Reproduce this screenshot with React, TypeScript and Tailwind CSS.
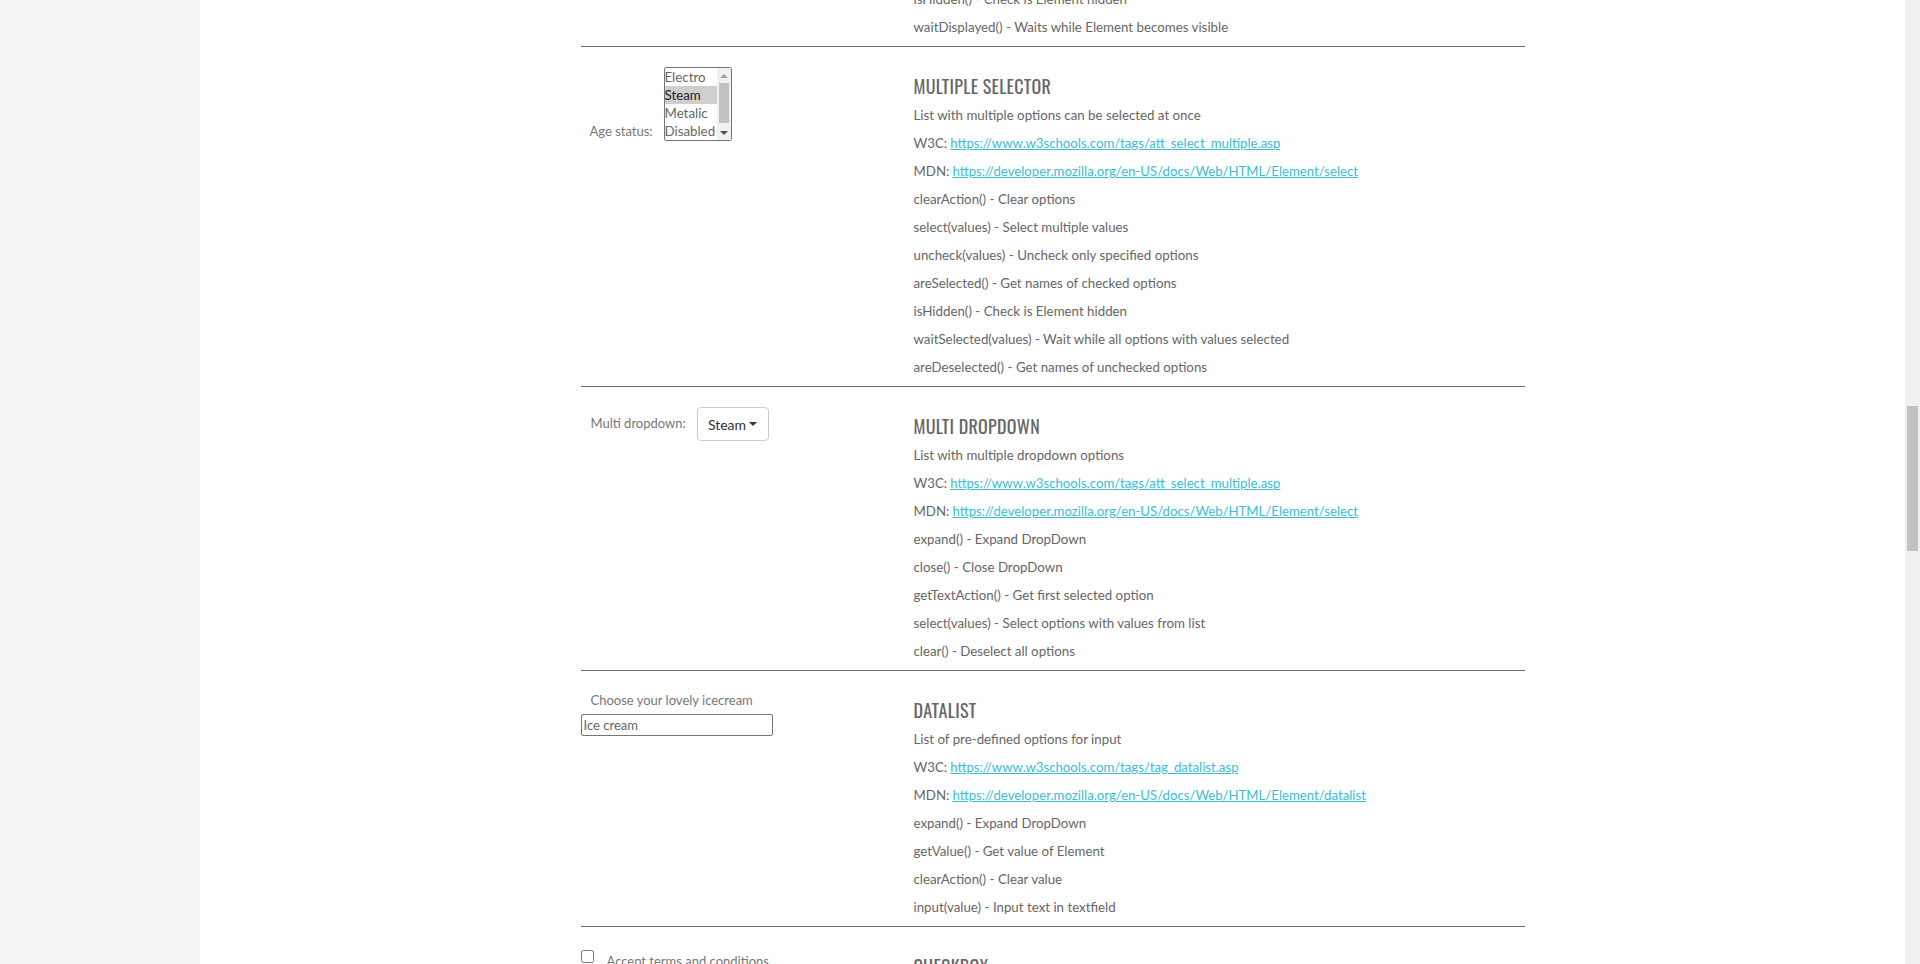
const body = { fontFamily: '"Source Sans Pro", Lato, "Liberation Sans", sans-serif' };
const head = { fontFamily: 'Oswald, "Liberation Sans Narrow", "DejaVu Sans Condensed", sans-serif' };

type Line = string | { label: string; href: string };

const Row = ({ line }: { line: Line }) =>
    typeof line === 'string' ? (
        <p className="h-[28px] leading-[28px] whitespace-nowrap">{line}</p>
    ) : (
        <p className="h-[28px] leading-[28px] whitespace-nowrap">
            {line.label}
            <a href={line.href} className="ml-[3px] text-[13.2px] text-[#3cbdd6] underline">
                {line.href}
            </a>
        </p>
    );

const Section = ({ title, lines, left }: { title: string; lines: Line[]; left: React.ReactNode }) => (
    <div className="flex border-t border-[#6b6b6b]">
        <div className="w-[333px] shrink-0 pt-[20px]">{left}</div>
        <div className="flex-1 pt-[25px] pb-[5px]">
            <h3 style={head} className="h-[29px] leading-[28px] text-[18px] text-[#666] uppercase tracking-[0.3px]">
                {title}
            </h3>
            {lines.map((l, i) => (
                <Row key={i} line={l} />
            ))}
        </div>
    </div>
);

// multi select box, drawn like the native control with its scrollbar
const ListBox = () => {
    const options = ['Electro', 'Steam', 'Metalic', 'Disabled'];
    return (
        <div role="listbox" className="flex w-[68px] h-[74px] border border-[#767676] rounded-[2px] bg-white overflow-hidden">
            <div className="flex-1 min-w-0">
                {options.map((o) => (
                    <div
                        key={o}
                        className={
                            o === 'Steam'
                                ? 'h-[18px] leading-[18px] text-[13.3px] bg-[#cecece] text-[#222]'
                                : 'h-[18px] leading-[18px] text-[13.3px] text-[#666]'
                        }
                    >
                        {o}
                    </div>
                ))}
            </div>
            <div className="w-[14px] bg-[#f1f1f1] flex flex-col items-center">
                <div className="h-[15px] flex items-center justify-center">
                    <span className="w-0 h-0 border-x-[4px] border-x-transparent border-b-[4px] border-b-[#a3a3a3]" />
                </div>
                <div className="w-[10px] h-[40px] bg-[#c1c1c1]" />
                <div className="flex-1" />
                <div className="h-[15px] flex items-center justify-center">
                    <span className="w-0 h-0 border-x-[4px] border-x-transparent border-t-[4px] border-t-[#505050]" />
                </div>
            </div>
        </div>
    );
};

export default function App() {
    return (
        <div style={body} className="flex h-[964px] overflow-hidden bg-white text-[13.3px] text-[#666]">
            <div className="w-[200px] shrink-0 bg-[#f4f4f4]" />
            <div className="flex-1 min-w-0">
                <div className="w-[944px] mx-auto">
                    {/* tail of previous block */}
                    <div className="flex -mt-[15px] pb-[5px]">
                        <div className="w-[333px] shrink-0" />
                        <div>
                            <Row line="isHidden() - Check is Element hidden" />
                            <Row line="waitDisplayed() - Waits while Element becomes visible" />
                        </div>
                    </div>

                    <Section
                        title="Multiple selector"
                        left={
                            <div className="flex items-end pl-[9px]">
                                <span className="w-[74px] text-[13px] text-[#777]">Age status:</span>
                                <ListBox />
                            </div>
                        }
                        lines={[
                            'List with multiple options can be selected at once',
                            { label: 'W3C:', href: 'https://www.w3schools.com/tags/att_select_multiple.asp' },
                            { label: 'MDN:', href: 'https://developer.mozilla.org/en-US/docs/Web/HTML/Element/select' },
                            'clearAction() - Clear options',
                            'select(values) - Select multiple values',
                            'uncheck(values) - Uncheck only specified options',
                            'areSelected() - Get names of checked options',
                            'isHidden() - Check is Element hidden',
                            'waitSelected(values) - Wait while all options with values selected',
                            'areDeselected() - Get names of unchecked options',
                        ]}
                    />

                    <Section
                        title="Multi dropdown"
                        left={
                            <div className="flex items-center pl-[10px]">
                                <span className="w-[106px] text-[13px] text-[#777]">Multi dropdown:</span>
                                <button className="h-[34px] w-[72px] flex items-center justify-center gap-[3px] border border-[#ccc] rounded-[4px] bg-white text-[14px] text-[#333]">
                                    Steam
                                    <span className="w-0 h-0 border-x-[4px] border-x-transparent border-t-[4px] border-t-[#333]" />
                                </button>
                            </div>
                        }
                        lines={[
                            'List with multiple dropdown options',
                            { label: 'W3C:', href: 'https://www.w3schools.com/tags/att_select_multiple.asp' },
                            { label: 'MDN:', href: 'https://developer.mozilla.org/en-US/docs/Web/HTML/Element/select' },
                            'expand() - Expand DropDown',
                            'close() - Close DropDown',
                            'getTextAction() - Get first selected option',
                            'select(values) - Select options with values from list',
                            'clear() - Deselect all options',
                        ]}
                    />

                    <Section
                        title="Datalist"
                        left={
                            <div>
                                <p className="pl-[10px] h-[18px] leading-[18px] text-[13px] text-[#777]">Choose your lovely icecream</p>
                                <input
                                    placeholder="Ice cream"
                                    style={body}
                                    className="mt-[5px] w-[192px] h-[22px] px-[2px] border border-[#767676] rounded-[2px] text-[13px] placeholder:text-[#666] outline-none"
                                />
                            </div>
                        }
                        lines={[
                            'List of pre-defined options for input',
                            { label: 'W3C:', href: 'https://www.w3schools.com/tags/tag_datalist.asp' },
                            { label: 'MDN:', href: 'https://developer.mozilla.org/en-US/docs/Web/HTML/Element/datalist' },
                            'expand() - Expand DropDown',
                            'getValue() - Get value of Element',
                            'clearAction() - Clear value',
                            'input(value) - Input text in textfield',
                        ]}
                    />

                    <Section
                        title="Checkbox"
                        left={
                            <label className="flex items-start gap-[13px] mt-[3px] text-[13px] text-[#777]">
                                <input type="checkbox" className="w-[13px] h-[13px] m-0" />
                                <span className="mt-[2px] leading-[18px]">Accept terms and conditions</span>
                            </label>
                        }
                        lines={[
                            'Checkbox',
                            'check() - Check checkbox',
                            'uncheck() - Uncheck checkbox',
                        ]}
                    />
                </div>
            </div>
            {/* page scrollbar */}
            <div className="w-[15px] shrink-0 bg-[#f1f1f1] pt-[406px] flex justify-center">
                <div className="w-[11px] h-[145px] bg-[#c1c1c1]" />
            </div>
        </div>
    );
}
